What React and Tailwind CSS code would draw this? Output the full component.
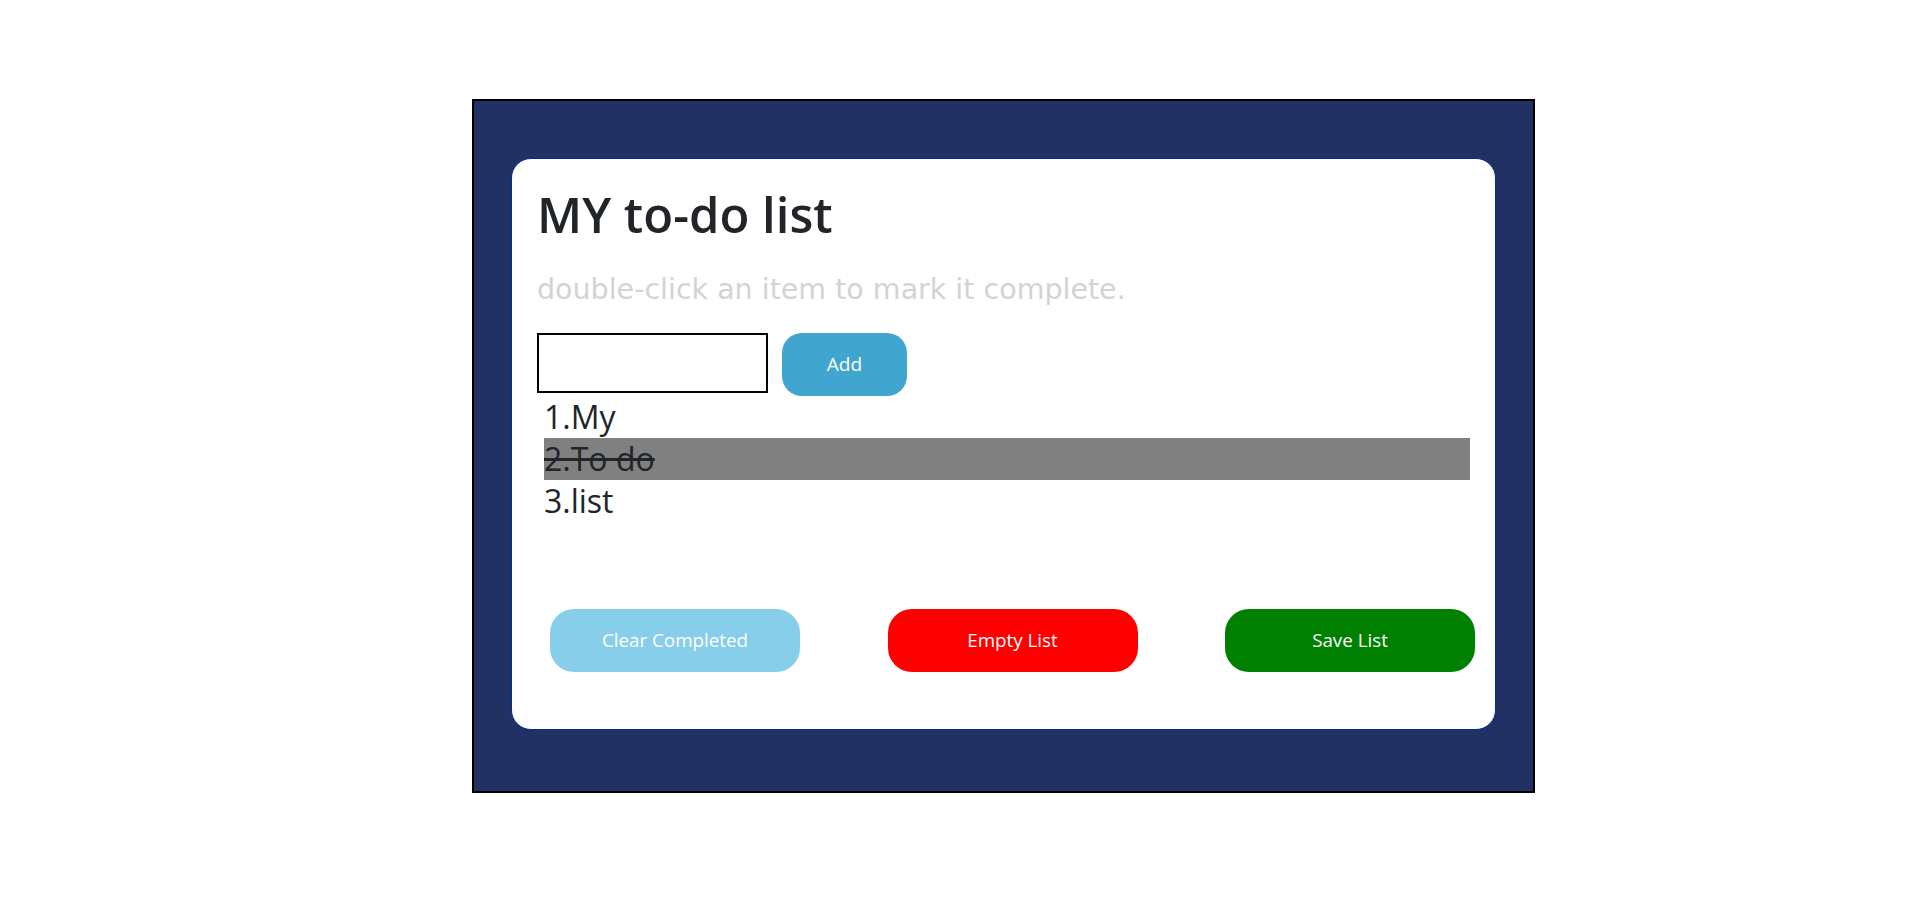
import React from "react";

export default function App() {
  const items = [
    { text: "1.My", done: false },
    { text: "2.To do", done: true },
    { text: "3.list", done: false },
  ];
  return (
    <div className="min-h-[907px] w-full bg-white pl-[472px] pt-[99px]" style={{ fontFamily: '"Open Sans", "Noto Sans", sans-serif' }}>
      <div className="w-[1063px] h-[694px] border-2 border-black bg-[#223163] pl-[37px] pt-[57px]">
        <div className="w-[985px] h-[572px] bg-white border border-[#00308a] rounded-[20px] px-[25px] pt-[25px] flex flex-col">
          <h1 className="text-[49px] leading-[60px] font-semibold text-[#212529]">MY to-do list</h1>
          <p
            className="mt-[29px] text-[28.5px] leading-[34px] text-[#d3d3d3]"
            style={{ fontFamily: '"DejaVu Sans", sans-serif' }}
          >
            double-click an item to mark it complete.
          </p>
          <div className="mt-[26px] flex items-start gap-[14px]">
            <input type="text" className="w-[231px] h-[60px] border-2 border-black bg-white outline-none" />
            <button className="w-[125px] h-[63px] rounded-[20px] bg-[#41a6cf] text-white text-[19px]">Add</button>
          </div>
          <ul className="ml-[7px] flex flex-col">
            {items.map((it) => (
              <li
                key={it.text}
                className={
                  "h-[42px] text-[32px] leading-[42px] text-[#212529] " +
                  (it.done ? "bg-[#808080] line-through" : "")
                }
              >
                {it.text}
              </li>
            ))}
          </ul>
          <div className="mt-[87px] pl-[13px] flex gap-[87.5px]">
            <button className="shrink-0 w-[250px] h-[63px] rounded-[24px] bg-[#87ceeb] text-white text-[18.8px]">Clear Completed</button>
            <button className="shrink-0 w-[250px] h-[63px] rounded-[24px] bg-[#ff0000] text-white text-[18.8px]">Empty List</button>
            <button className="shrink-0 w-[250px] h-[63px] rounded-[24px] bg-[#008000] text-white text-[18.8px]">Save List</button>
          </div>
        </div>
      </div>
    </div>
  );
}
